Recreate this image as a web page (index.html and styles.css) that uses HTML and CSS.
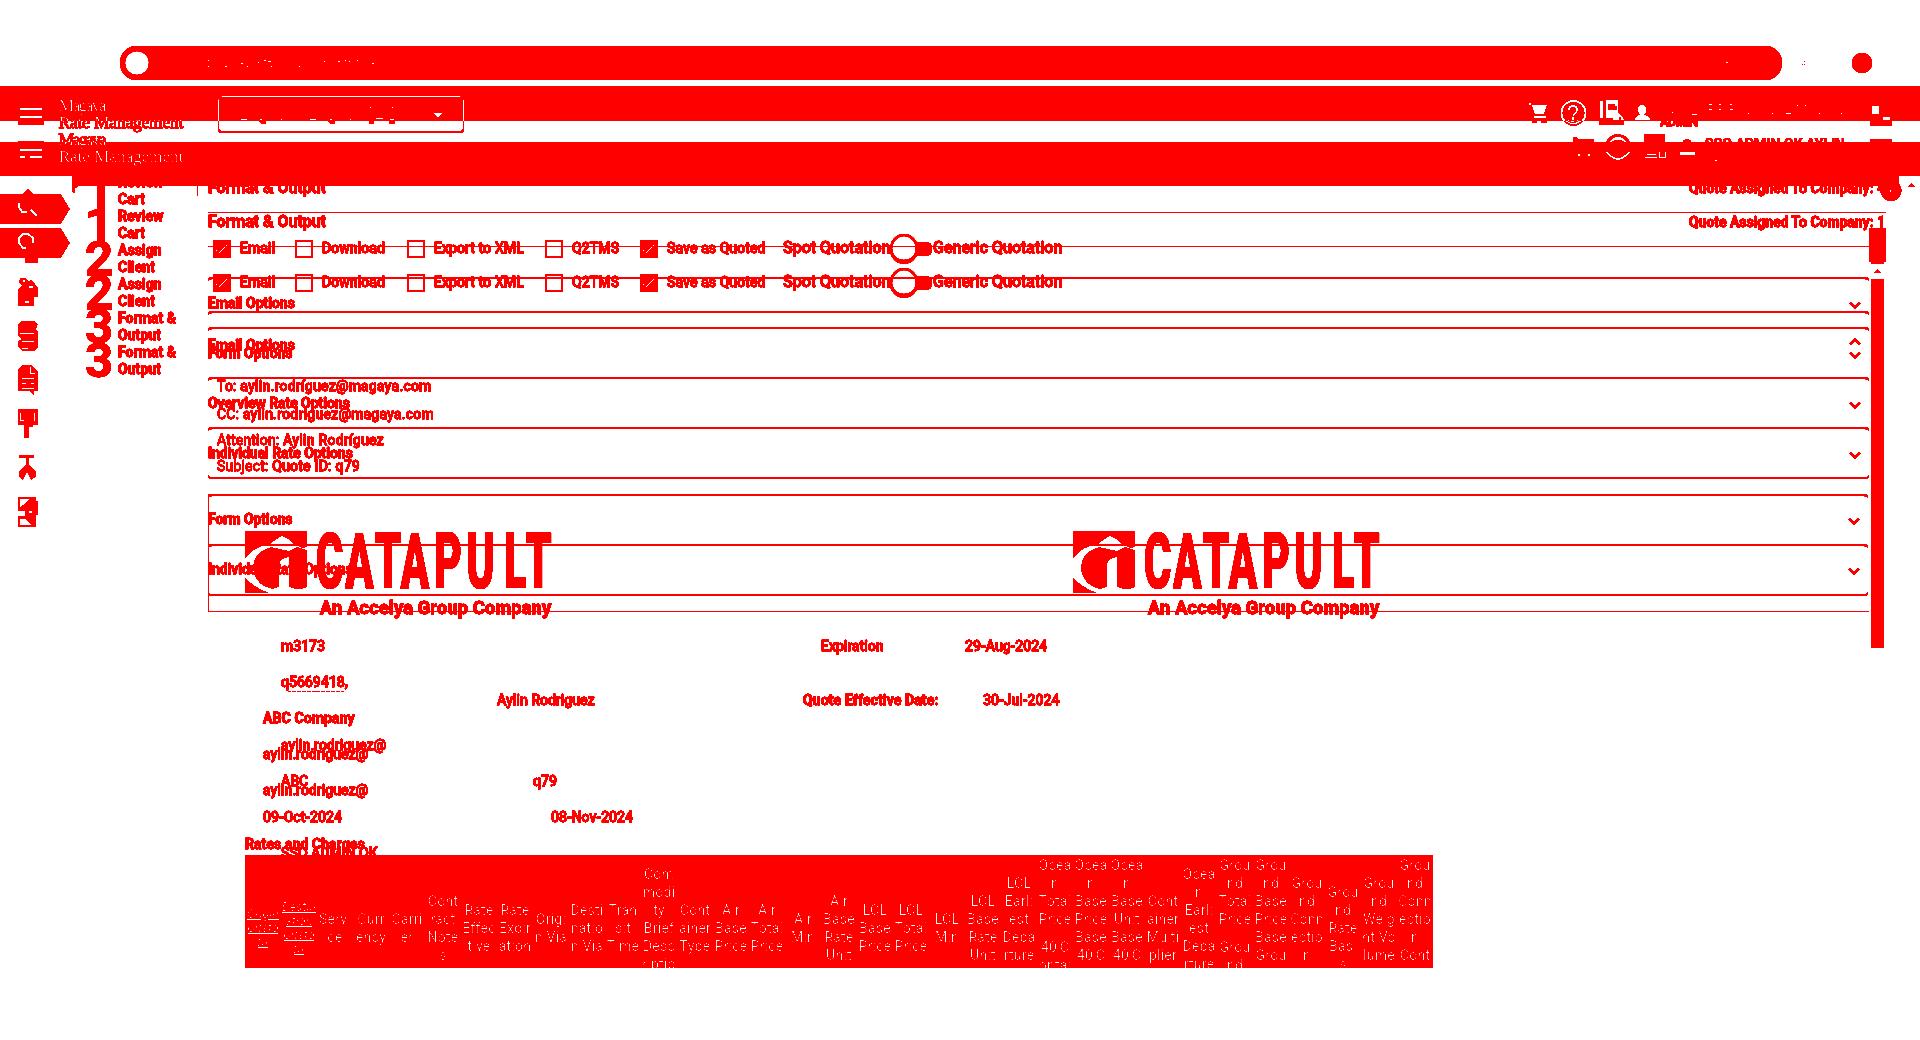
FILE: index.html
```html
<!DOCTYPE html>
<html lang="en">
<head>
<meta charset="utf-8">
<title>Rate Management</title>
<link rel="stylesheet" href="styles.css">
</head>
<body>
<svg class="defs" width="0" height="0">
  <filter id="hard" color-interpolation-filters="sRGB" x="0" y="0" width="100%" height="100%">
    <feComponentTransfer><feFuncG type="linear" slope="14" intercept="-13"/><feFuncB type="linear" slope="14" intercept="-13"/></feComponentTransfer>
  </filter>
  <symbol id="check" viewBox="0 0 14 14"><path d="M1 8h1v1H1zM4 10h1v1H4zM5 9h1v1H5zM6 8h1v1H6zM7 7h1v1H7zM8 6h1v1H8zM9 5h1v1H9zM10 4h1v1h-1zM11 3h1v1h-1z" fill="#fff"/></symbol>
  <symbol id="down" viewBox="0 0 12 8"><path d="M1 1.5l5 5 5-5" fill="none" stroke="red" stroke-width="2.4"/></symbol>
  <symbol id="logo" viewBox="0 0 308 90">
    <path fill="red" fill-rule="evenodd" d="M0 0h62v62H0zM0 28Q10 14 26 14L26 12L32 8L37 5L43 8L48 13L57 17L62 16V19L52 16L44 20L26 16Q8 21 8 38Q10 54 27 58L34 56V33Q35 27 44 26V56Q54 60 62 56V62H24Q8 56 0 46z"/>
    <g transform="scale(.54 1)"><text class="wordmark" y="57"><tspan x="131">C</tspan><tspan x="185">A</tspan><tspan x="240">T</tspan><tspan x="288">A</tspan><tspan x="351">P</tspan><tspan x="410">U</tspan><tspan x="479">L</tspan><tspan x="519">T</tspan></text></g>
    <text class="tagline" x="75" y="83" textLength="231">An Accelya Group Company</text>
  </symbol>
</svg>
<div class="stage">

  <div class="layer browser">
    <div class="address"><i class="site"></i>
      <svg width="1600" height="34"><path d="M59 14.500h1M59 20.500h1M76 20.500h2M92 17.500h2M98 20.500h1M109 16.500h1M115 14.500h2M119 15.500h3M122 20.500h1M150 20.500h1M175 15.500h1M189 15.500h2M196 14.500h1M200 15.500h1M208 14.500h1M223 17.500h2" stroke="#fff"/></svg>
      <i class="dash"></i></div>
    <svg class="more" width="4" height="6"><path d="M0 4.500h1M2 4.500h1M2 1.500h1" stroke="red"/></svg>
    <i class="avatar"></i>
  </div>

  <div class="layer rail">
    <svg width="72" height="350" viewBox="0 185 72 350" fill="red">
      <path d="M28 189l7 6H21zM0 194h61l9 15-9 15H0zM0 228h61l9 15-9 15H0z"/>
      <path d="M25 256h13v7H25z"/>
      <path fill-rule="evenodd" d="M20 278h5l3 3 4-1 6 8v9h-4v9H18v-17l4-3-3-3zM23 280v2h2v-2zM29 286v2h4v-2zM25 301v2h4v-2z"/>
      <path d="M21 321h13l4 3-2 6 2 2v15l-4 4H23l-5-4v-6l4-2-4-3v-11zM22 365h10l6 7v19h-4v4l-5-4H18v-22zM18 409h20v16h-5v2h-4v11h-5v-13h-6zM19 455h15v3h-5v7l7 6v6l-5 3-4-8-4 8-4-3v-6l7-7v-6h-7zM18 497h18v4h2v14h-2v12H18v-11h7v-5h-7z"/>
      <g fill="none" stroke="#fff" stroke-width="1.800"><path d="M19 203v4l3 5h5M31 210l6 6"/><path d="M26 248h-3l-4-5v-5l4-4h5l5 4v5"/><path stroke-width="1" d="M20 333.500h14M22 341.500h12M30 367v6h5M22 378.500h12M22 383.500h4M31 383.500h3M22 388.500h12M20.500 413v7h3M34.500 413v8M22 348.500h6"/></g>
      <path fill="#fff" d="M20 499h10l-7 6-3 2zM20 519h5l6 6H20zM29 511h3v2h-3z"/>
    </svg>
  </div>

  <div class="layer app">
    <ol class="steps">
      <li><b>1</b><span>Review<br>Cart</span></li><li><b>2</b><span>Assign<br>Client</span></li><li><b>3</b><span>Format &amp;<br>Output</span></li>
    </ol>
    <main>
      <div class="title"><h1>Format &amp; Output</h1><span>Quote Assigned To Company: 4</span></div>
      <div class="options">
        <i class="box"><svg><use href="#check"/></svg></i><span class="o1">Email</span><i class="box"></i><span class="o2">Download</span><i class="box"></i><span class="o3">Export to XML</span><i class="box"></i><span class="o4">Q2TMS</span><i class="box"><svg><use href="#check"/></svg></i><span class="o5">Save as Quoted</span>
        <strong class="spot">Spot Quotation</strong><i class="toggle"></i><strong>Generic Quotation</strong>
      </div>
      <section class="item"><span>Email Options</span><svg><use href="#down"/></svg></section>
      <section class="item"><span>Form Options</span><svg><use href="#down"/></svg></section>
      <section class="item"><span>Overview Rate Options</span><svg><use href="#down"/></svg></section>
      <section class="item last"><span>Individual Rate Options</span><svg><use href="#down"/></svg></section>
    </main>
  </div>

  <div class="layer under">
    <svg width="400" height="60" viewBox="1520 120 400 60" fill="red"><path d="M1573 137h4l1 2h16v6h-21zM1644 134h21v10h-21zM1683 142q0-3 4-3t4 3zM1870 139h22v4h-22z"/><circle cx="1618" cy="147" r="11.5" fill="none" stroke="red" stroke-width="3"/><path d="M1610 143q8-7 16 0z"/><text class="user" x="1705" y="149" textLength="140">SSO ADMIN OK AYLIN</text></svg>
  </div>

  <header class="layer topbar">
    <div class="strip"></div><div class="strip second"></div><div class="fill"></div>
  </header>

  <div class="layer marks">
    <svg width="215" height="92" viewBox="0 86 215 92"><path fill="none" stroke="#0ff" stroke-width="2" d="M20 109h22M20 117h22M20 150h22M20 157h5M30 157h12"/><path fill="#0ff" d="M18 121h26v4H18zM18 141h26v1H18z"/>
      <g class="brand"><text x="58.500" y="111" textLength="48">Magaya</text><text x="58.500" y="128" textLength="125">Rate Management</text><text x="58.500" y="145" textLength="48">Magaya</text><text x="58.500" y="162" textLength="125">Rate Management</text></g></svg>
    <div class="select"><svg width="240" height="34" viewBox="219 97 240 34"><path fill="#0ff" d="M433 113h9l-4 5zM258 121h8v3h-5zM327 121h8v3h-5zM369 121h5v3h-5zM389 121h6v3h-6z"/><path stroke="#0ff" d="M241 119.500h6M310 119.500h6M260 119.500h2M281 119.500h1M330 119.500h2M350 119.500h1M376 118.500h7M370 107.500h1M392 107.500h1M390 119.500h4"/></svg></div>
    <svg class="tools" width="400" height="92" viewBox="1520 86 400 92" fill="#0ff">
      <path fill-rule="evenodd" d="M1529 103h2v2h-2zM1532 105h15l-3 9h-9zM1534 116h12v2h-12zM1532 121h5v2h-5zM1541 121h6v2h-6zM1600 101h3v17h-3zM1606 100h12v13l-6 5h-6zM1608 104v6h9v-4h-2v-2zM1599 121h25v4h-25zM1613 120v-3l5-4 4 3 2 4h-3v-3h-2v3zM1635 120q0-4 5-5-2-3-2-5 0-5 4-5t4 5q0 3-2 5 6 1 6 5zM1872 106h7v8h-7zM1883 117h7v3h-7zM1870 121h22v5h-22zM1680 152h15v3h-15zM1578 154h2v2h-2zM1588 154h2v2h-2z"/>
      <g fill="none" stroke="#0ff"><circle cx="1573.500" cy="113" r="12" stroke-width="1.800"/><path stroke-width="1.500" d="M1569 110q0-4 4-4t4 4q0 2-4 5M1573 117v3M1568 121q5 3 10 0"/><path stroke-width="1.500" d="M1607 152q11 14 22 0"/><path d="M1647 154.500h9M1645 157.500h12M1659.500 152v5h6v-5M1672 112.500h1M1692 114.500h5M1709 104.500h3M1709 109.500h3M1719 104.500h2M1719 109.500h2M1730 104.500h2M1730 109.500h3M1748 113.500h1M1772 113.500h1M1786 113.500h5M1797 105.500h1M1805 105.500h1M1819 113.500h1M1841 113.500h1M1715 160.500h2"/></g>
    </svg>
    <div class="admin">ADMIN</div>
  </div>

  <div class="layer app lower">
    <ol class="steps">
      <li><b>1</b><span>Review<br>Cart</span></li><li><b>2</b><span>Assign<br>Client</span></li><li><b>3</b><span>Format &amp;<br>Output</span></li>
    </ol>
    <main>
      <div class="title"><h1>Format &amp; Output</h1><span>Quote Assigned To Company: 1</span></div>
      <div class="options">
        <i class="box"><svg><use href="#check"/></svg></i><span class="o1">Email</span><i class="box"></i><span class="o2">Download</span><i class="box"></i><span class="o3">Export to XML</span><i class="box"></i><span class="o4">Q2TMS</span><i class="box"><svg><use href="#check"/></svg></i><span class="o5">Save as Quoted</span>
        <strong class="spot">Spot Quotation</strong><i class="toggle"></i><strong>Generic Quotation</strong>
      </div>
      <section class="item open">
        <div class="head"><span>Email Options</span><svg class="up"><use href="#down"/></svg></div>
        <p class="to">To: <b>aylin.rodríguez@magaya.com</b></p><p class="cc">CC: <b>aylin.rodriguez@magaya.com</b></p><p class="att">Attention: <b>Aylin Rodríguez</b></p><p>Subject: <b>Quote ID: q79</b></p>
      </section>
      <div class="frame">
        <section class="item"><span>Form Options</span><svg><use href="#down"/></svg></section>
        <section class="item last"><span>Individual Rate Options</span><svg><use href="#down"/></svg></section>
      </div>
    </main>
  </div>

  <div class="layer scroll">
    <svg width="60" height="480" viewBox="1860 175 60 480" fill="red"><circle cx="1891" cy="190.500" r="10.700"/><path fill="#fff" d="M1890 190h1v2h-1z"/><path d="M1907 187h8l-4-4zM1869 228h17v34h-2v2h-13v-2h-2zM1874 273h7l-3.500-4zM1871 279h13v369h-13z"/></svg>
  </div>
  <div class="layer notch"><i class="tip"></i><i class="rule"></i></div>

  <div class="layer preview">
    <div class="logos"><svg><use href="#logo"/></svg><svg><use href="#logo"/></svg></div>
    <div class="details">
      <div class="set inner">
        <div class="r tall"><span>m3173</span><i></i><span>Expiration</span><span>29-Aug-2024</span></div>
        <div class="r id"><span>q<u>5669418</u>,</span></div>
        <div class="r tall"><span>aylin.rodriguez@</span></div>
        <div class="r owner"><span>ABC</span><span>q79</span></div>
        <div class="r"><span>SSO ADMIN OK</span></div>
      </div>
      <div class="set outer">
        <div class="r"><i></i><span class="wide">Aylin Rodriguez</span><span class="b">Quote Effective Date:</span><span>30-Jul-2024</span></div>
        <div class="r tall"><span class="b">ABC Company</span></div>
        <div class="r tall"><span>aylin.rodriguez@</span></div>
        <div class="r mid"><span>aylin.rodriguez@</span></div>
        <div class="r mid"><span>09-Oct-2024</span><i></i><span>08-Nov-2024</span></div>
        <h2>Rates and Charges</h2>
      </div>
    </div>
    <div class="rates"><div class="cols">
      <div class="c link">Origin<br>Custo<br>m</div><div class="c link">Destin<br>ation<br>Custo<br>m</div><div class="c">Servi<br>ce</div><div class="c">Curr<br>ency</div><div class="c">Carri<br>er</div><div class="c">Cont<br>ract<br>Note<br>s</div><div class="c">Rate<br>Effec<br>tive</div><div class="c">Rate<br>Expir<br>ation</div><div class="c">Origi<br>n Via</div><div class="c">Desti<br>natio<br>n Via</div><div class="c">Tran<br>sit<br>Time</div><div class="c">Com<br>modi<br>ty<br>Brief<br>Desc<br>riptio<br>n</div><div class="c">Cont<br>ainer<br>Type</div><div class="c">Air<br>Base<br>Price</div><div class="c">Air<br>Total<br>Price</div><div class="c">Air<br>Min</div><div class="c">Air<br>Base<br>Rate<br>Unit</div><div class="c">LCL<br>Base<br>Price</div><div class="c">LCL<br>Total<br>Price</div><div class="c">LCL<br>Min</div><div class="c">LCL<br>Base<br>Rate<br>Unit</div><div class="c">LCL<br>Earli<br>est<br>Depa<br>rture<br>&nbsp;</div><div class="c top">Ocea<br>n<br>Total<br>Price<span>40'C<br>ontai</span></div><div class="c top">Ocea<br>n<br>Base<br>Price<br>Base<br>40'C</div><div class="c top">Ocea<br>n<br>Base<br>Unit<br>Base<br>40'C</div><div class="c">Cont<br>ainer<br>Multi<br>plier</div><div class="c">Ocea<br>n<br>Earli<br>est<br>Depa<br>rture<br>&nbsp;</div><div class="c top">Grou<br>nd<br>Total<br>Price<span>Grou<br>nd</span></div><div class="c top">Grou<br>nd<br>Base<br>Price<br>Base<br>Grou</div><div class="c">Grou<br>nd<br>Conn<br>ectio<br>n<br>&nbsp;</div><div class="c">Grou<br>nd<br>Rate<br>Basi<br>s</div><div class="c">Grou<br>nd<br>Weig<br>ht Vo<br>lume<br>&nbsp;</div><div class="c top">Grou<br>nd<br>Conn<br>ectio<br>n<br>Cont</div>
    </div></div>
  </div>
</div>
</body>
</html>
```
FILE: styles.css
```css
* { box-sizing: border-box; }
body { margin: 0; background: #fff; font: 500 14px/18px Roboto, sans-serif; color: red; -webkit-text-stroke: .3px red; }
i { font-style: normal; }
h1, h2, p, ol { margin: 0; padding: 0; }
.defs { position: absolute; }
.stage { display: grid; width: 1920px; height: 1040px; overflow: hidden; background: #fff; filter: url(#hard); }
.layer { grid-area: 1 / 1; min-width: 0; }
svg { display: block; shape-rendering: crispEdges; }

.browser { display: flex; align-items: flex-start; padding: 46px 0 0 120px; }
.address { display: flex; align-items: center; width: 1662px; height: 34px; border-radius: 17px; background: red; }
.site { width: 24px; height: 24px; margin-left: 5px; border-radius: 50%; background: #fff; flex: none; }
.address svg { flex: 1; }
.dash { width: 2px; height: 1px; margin: 0 54px 2px 0; background: #fff; }
.more { margin: 14px 0 0 20px; }
.avatar { width: 20px; height: 20px; margin: 7px 0 0 46px; border-radius: 50%; background: red; }

.rail { padding-top: 185px; }

.app { display: flex; align-items: flex-start; padding: 171px 0 0 84px; }
.lower { padding-top: 205px; }
.steps { width: 124px; list-style: none; }
.steps li { display: flex; height: 68px; line-height: 17px; font-weight: 700; letter-spacing: .05px; }
.steps li b { width: 34px; padding-left: 1px; font: 700 49px/58px Roboto, sans-serif; margin-top: -9px; }
.steps li span { margin-top: 3px; }
main { width: 1678px; padding-top: 7px; }
.title { display: flex; justify-content: space-between; height: 35px; border-bottom: 1px solid red; font-weight: 700; line-height: 20px; letter-spacing: -.03px; padding-right: 1px; }
h1 { font: 700 16px/20px Roboto, sans-serif; }
.options { display: flex; align-items: center; height: 64px; padding: 8px 0 0 5px; }
.box { width: 18px; height: 18px; border: 2px solid red; flex: none; }
.box:has(svg) { background: red; }
.box svg { width: 14px; height: 14px; }
.options span { padding: 0 0 2px 9px; flex: none; white-space: nowrap; letter-spacing: .08px; }
.o1 { width: 64px; } .o2 { width: 94px; } .o3 { width: 120px; } .o4 { width: 77px; } .o5 { width: 125px; }
.options strong { font-size: 16px; font-weight: 500; white-space: nowrap; padding-bottom: 2px; }
.options .spot { width: 107px; }
.toggle { display: flex; align-items: center; width: 43px; height: 24px; }
.toggle::before { content: ""; width: 24px; height: 24px; border: 2px solid red; border-bottom-width: 4px; border-radius: 50%; }
.toggle::after { content: ""; width: 17px; height: 14px; margin-left: -3px; background: red; border-radius: 0 6px 6px 0; }
.item { display: flex; align-items: center; justify-content: space-between; width: 1661px; height: 50px; padding-right: 8px; border-top: 2px solid red; border-radius: 4px; font-weight: 700; letter-spacing: -.05px; }
.item svg { width: 12px; height: 8px; margin-top: 4px; }
.item.last { height: 52px; border-bottom: 2px solid red; }
.item .up { transform: rotate(180deg); margin-top: -6px; }
.open { display: block; height: 183px; padding-top: 23px; }
.head { display: flex; justify-content: space-between; align-items: center; height: 41px; padding-bottom: 23px; }
.open p { height: 27px; padding-left: 9px; font-weight: 400; letter-spacing: .2px; }
.open .to { height: 28px; }
.open .cc, .open .att { height: 26px; }
.open p b { font-weight: 500; }
.frame { width: 1661px; height: 118px; border: 1px solid red; border-width: 0 0 1px 1px; }
.frame .item { width: 1660px; margin-left: -1px; padding-bottom: 2px; }

.under { padding: 120px 0 0 1520px; }
.user { font: 700 14px Roboto, sans-serif; }
.topbar { padding-top: 86px; }
.strip { height: 35px; background: red; }
.strip.second { height: 34px; margin-top: 21px; }
.fill { height: 10px; margin: 0 21px 0 72px; background: red; }
.marks { display: grid; grid-template-columns: 218px 1302px 400px; padding-top: 86px; mix-blend-mode: difference; align-content: start; -webkit-text-stroke: .35px #0ff; }
.marks > * { grid-row: 1; }
.brand { fill: #0ff; stroke: #0ff; stroke-width: .35px; font: 400 17.500px "Liberation Serif", serif; }
.select { width: 246px; height: 37px; margin-top: 10px; border: 1px solid #0ff; border-bottom-width: 2px; border-radius: 4px; }
.tools { grid-column: 3; }
.admin { grid-column: 3; height: 8px; margin: 35px 0 0 140px; overflow: hidden; color: #0ff; font-weight: 700; line-height: 2px; letter-spacing: -.5px; font-size: 12.500px; }

.scroll { padding: 175px 0 0 1860px; }
.notch { display: flex; padding: 186px 0 0 72px; align-items: flex-start; }
.tip { width: 6px; height: 7px; background: red; clip-path: polygon(0 0, 100% 0, 50% 30%, 40% 100%, 0 70%); }
.rule { width: 1px; height: 10px; margin-left: 119px; background: red; }

.preview { padding: 531px 0 0 245px; }
.logos { display: flex; gap: 520px; height: 106px; }
.logos svg { width: 308px; height: 90px; flex: none; }
.wordmark { font: 900 78px Roboto, sans-serif; fill: red; }
.tagline { font: 700 18px Roboto, sans-serif; fill: red; stroke: red; stroke-width: .4px; }
.details { display: grid; height: 218px; }
.set { grid-area: 1 / 1; }
.r { display: grid; height: 18px; white-space: nowrap; align-items: start; }
.r.tall { height: 36px; }
.r.mid { height: 27px; }
.outer .tall + .mid { height: 27px; }
.inner { padding-left: 36px; }
.inner .r { grid-template-columns: 252px 288px 144px auto; }
.inner .r i { width: 0; }
.inner .r.id { height: 63px; }
.inner .r.owner { height: 72px; }
.r u { text-decoration: underline dashed; text-underline-offset: 4px; text-decoration-thickness: 1px; }
.outer { padding: 54px 0 0 18px; }
.outer .r { grid-template-columns: 234px 54px 252px 180px auto; }
.wide { grid-column: span 2; }
.b { font-weight: 700; letter-spacing: .12px; }
h2 { font: 700 14px/18px Roboto, sans-serif; margin-left: -18px; letter-spacing: .08px; }
.rates { width: 1188px; height: 113px; background: red; overflow: hidden; }
.cols { display: grid; grid-template-columns: repeat(33, 36px); height: 146px; color: #fff; font-weight: 400; text-align: center; letter-spacing: .25px; white-space: nowrap; -webkit-text-stroke: .45px #fff; }
.c { align-self: center; }
.c.top { align-self: start; padding-top: 1px; }
.c span { display: block; margin-top: 10px; }
.link { font-size: 12px; line-height: 14px; font-style: italic; text-decoration: underline; -webkit-text-stroke: 0; }
```
